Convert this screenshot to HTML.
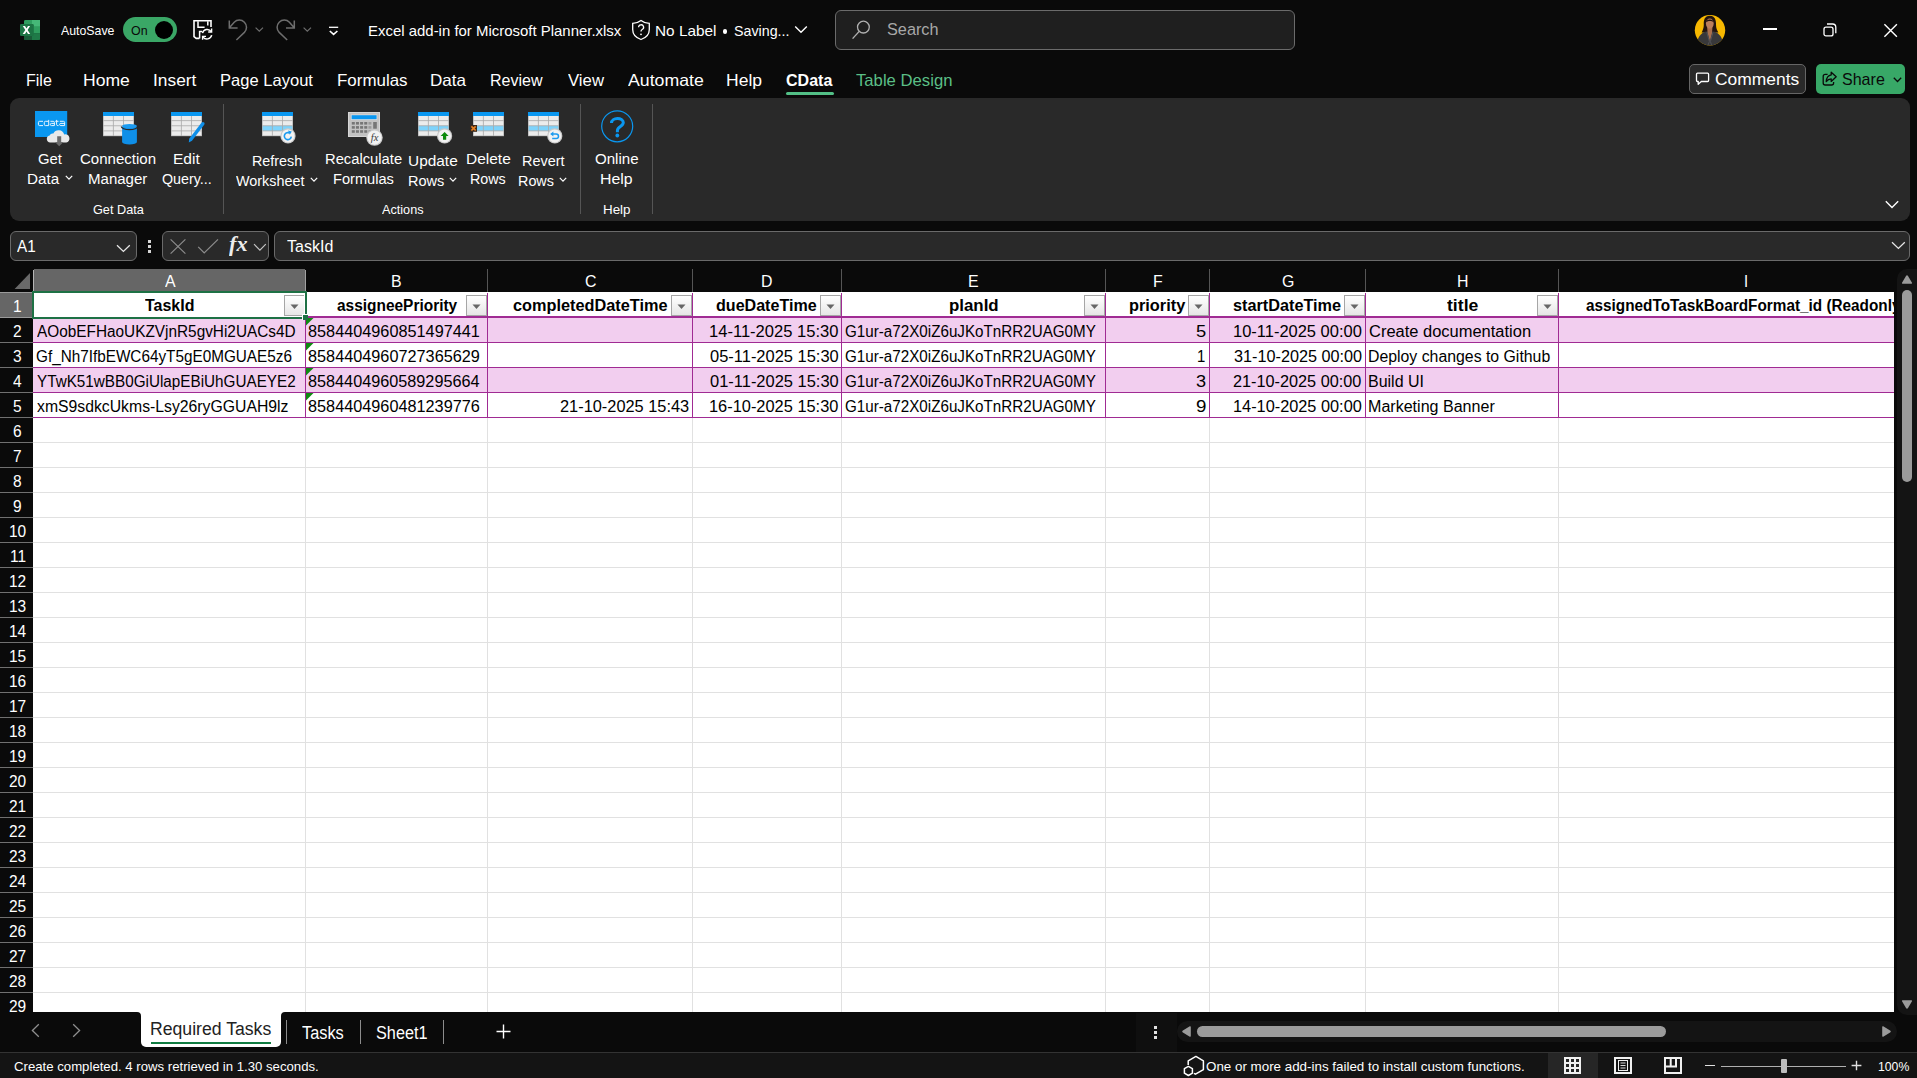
<!DOCTYPE html>
<html><head><meta charset="utf-8"><title>Excel</title>
<style>
html,body{margin:0;padding:0;}
body{width:1917px;height:1078px;overflow:hidden;background:#0a0a0a;position:relative;font-family:"Liberation Sans",sans-serif;}
.t{position:absolute;white-space:nowrap;transform-origin:0 0;display:block;}
.b{position:absolute;box-sizing:border-box;display:block;}
</style></head><body>
<svg class="b" style="left:20px;top:19px" width="21" height="22" viewBox="0 0 21 22">
<rect x="4" y="1" width="16" height="20" rx="1.6" fill="#1f7a48"/>
<rect x="12" y="1" width="8" height="6.7" fill="#45b877"/>
<path d="M5.6 1 H12 V7.7 H4 V2.6 Q4 1 5.6 1 Z" fill="#2f9e5f"/>
<rect x="4" y="7.7" width="8" height="6.6" fill="#1f7a48"/>
<rect x="12" y="7.7" width="8" height="6.6" fill="#2f9e5f"/>
<path d="M4 14.3 H20 V19.4 Q20 21 18.4 21 H5.6 Q4 21 4 19.4 Z" fill="#195c38"/>
<path d="M12 14.3 H20 V19.4 Q20 21 18.4 21 H12 Z" fill="#1f7a48"/>
<rect x="0" y="5" width="13.8" height="12" rx="1.2" fill="#1c7444"/>
<path d="M2.8 6.9 L5 6.9 L6.5 9.6 L8 6.9 L10.1 6.9 L7.6 11 L10.2 15.1 L8 15.1 L6.5 12.4 L5 15.1 L2.7 15.1 L5.3 11 Z" fill="#fff"/>
</svg>
<span class="t" style="left:61.00px;top:24px;font-size:12.2px;line-height:15px;color:#ffffff;transform:scaleX(1.0115);">AutoSave</span>
<div class="b" style="left:123px;top:17px;width:54.3px;height:25px;background:#3aa766;border-radius:12.5px;"></div>
<div class="b" style="left:155.1px;top:20.9px;width:17.8px;height:17.8px;background:#000;border-radius:9px;"></div>
<span class="t" style="left:131.34px;top:24px;font-size:12.2px;line-height:15px;color:#0a0a0a;transform:scaleX(1.0196);">On</span>
<svg class="b" style="left:192px;top:19px" width="22" height="22" viewBox="0 0 22 22"><path d="M19 8 V1.8 H2 V17.6 L4.2 19.4 H7.4" fill="none" stroke="#fff" stroke-width="1.6"/>
<path d="M6 2.2 V8.2 H12.6 M15.8 2.2 V6.6" fill="none" stroke="#fff" stroke-width="1.5"/>
<path d="M7.6 19.4 V12.4 H10.2" fill="none" stroke="#fff" stroke-width="1.5"/>
<path d="M10.5 14.2 A4.8 4.8 0 0 1 19.2 12.6 M19.7 16.2 A4.8 4.8 0 0 1 11 17.8" fill="none" stroke="#fff" stroke-width="1.5"/>
<path d="M19.6 9.6 V13 H16.2 M10.6 20.8 V17.4 H14" fill="none" stroke="#fff" stroke-width="1.4"/></svg>
<svg class="b" style="left:228px;top:18px" width="22" height="24" viewBox="0 0 22 24"><path d="M1.3 2.4 V9.9 H9.6 M1.6 9.6 L6.2 4.2 A7.2 7.2 0 0 1 16.4 14.4 L8.4 22" fill="none" stroke="#6e6e6e" stroke-width="1.5"/></svg>
<svg class="b" style="left:255px;top:27px" width="9" height="6" viewBox="0 0 9 6"><path d="M0.6 0.6 L4.3 4.2 L8 0.6" fill="none" stroke="#6e6e6e" stroke-width="1.2"/></svg>
<svg class="b" style="left:276px;top:18px" width="22" height="24" viewBox="0 0 22 24"><path d="M18.3 2.4 V9.9 H10 M18 9.6 L13.4 4.2 A7.2 7.2 0 0 0 3.2 14.4 L11.2 22" fill="none" stroke="#6e6e6e" stroke-width="1.5"/></svg>
<svg class="b" style="left:303px;top:27px" width="9" height="6" viewBox="0 0 9 6"><path d="M0.6 0.6 L4.3 4.2 L8 0.6" fill="none" stroke="#6e6e6e" stroke-width="1.2"/></svg>
<svg class="b" style="left:328px;top:25px" width="12" height="11" viewBox="0 0 12 11"><path d="M1 2.3 H10.2" stroke="#fff" stroke-width="1.3"/><path d="M1.8 6 L5.6 9.4 L9.4 6" fill="none" stroke="#fff" stroke-width="1.6"/></svg>
<span class="t" style="left:367.80px;top:22px;font-size:14.8px;line-height:18px;color:#ffffff;transform:scaleX(1.0099);">Excel add-in for Microsoft Planner.xlsx</span>
<svg class="b" style="left:631px;top:19px" width="20" height="22" viewBox="0 0 20 22"><path d="M10 1.5 C12.5 3.5 15.5 4.3 18.3 4.3 V10.5 C18.3 15.5 15 18.8 10 20.5 C5 18.8 1.7 15.5 1.7 10.5 V4.3 C4.5 4.3 7.5 3.5 10 1.5 Z" fill="none" stroke="#fff" stroke-width="1.3"/>
<path d="M7.6 8.3 a2.5 2.5 0 1 1 3.6 2.2 c-0.9 0.5 -1.2 1 -1.2 2" fill="none" stroke="#fff" stroke-width="1.3"/><circle cx="10" cy="15.3" r="0.9" fill="#fff"/></svg>
<span class="t" style="left:655.27px;top:22px;font-size:14.8px;line-height:18px;color:#ffffff;transform:scaleX(1.0380);">No Label</span>
<div class="b" style="left:722.8px;top:29px;width:4.5px;height:4.5px;background:#fff;border-radius:2.3px;"></div>
<span class="t" style="left:734.06px;top:22px;font-size:14.8px;line-height:18px;color:#ffffff;transform:scaleX(0.9632);">Saving...</span>
<svg class="b" style="left:794px;top:25px" width="14" height="10" viewBox="0 0 14 10"><path d="M1.2 1.5 L7 7.3 L12.8 1.5" fill="none" stroke="#fff" stroke-width="1.4"/></svg>
<div class="b" style="left:835px;top:10px;width:460px;height:40px;background:#1f1f1f;border:1px solid #6b6b6b;border-radius:6px;"></div>
<svg class="b" style="left:851px;top:20px" width="20" height="20" viewBox="0 0 20 20"><circle cx="12.4" cy="7.1" r="5.9" fill="none" stroke="#b0b0b0" stroke-width="1.3"/><path d="M8.2 11.4 L1.6 18.6" stroke="#b0b0b0" stroke-width="1.4"/></svg>
<span class="t" style="left:886.87px;top:20px;font-size:16.7px;line-height:20px;color:#a8a8a8;transform:scaleX(0.9745);">Search</span>
<svg class="b" style="left:1694px;top:14px" width="32" height="32" viewBox="0 0 32 32"><defs><clipPath id="av"><circle cx="16" cy="16.2" r="15.2"/></clipPath></defs>
<circle cx="16" cy="16.2" r="15.2" fill="#f7b801"/>
<g clip-path="url(#av)">
<path d="M15.8 1.8 C10.5 1.8 9.6 6.5 9.8 10.5 C9.9 14 8.6 16.5 7.6 18.6 L24.4 18.6 C23 16.3 22 14 22 10.5 C22.2 6.5 21 1.8 15.8 1.8 Z" fill="#22140f"/>
<path d="M2.5 33 C3 24 6 19.5 12 17.6 L19.6 17.6 C26 19.5 29 24 29.5 33 Z" fill="#38383a"/>
<path d="M13.2 14 H18.4 L18 19 L15.9 27 L13.6 19 Z" fill="#a86f4e"/>
<ellipse cx="15.8" cy="9.6" rx="3.9" ry="5.1" fill="#ba7f5c"/>
<path d="M11.8 8.6 C12 4.6 19.6 4.6 19.9 8.6 C18.5 6.6 13.2 6.6 11.8 8.6 Z" fill="#22140f"/>
<path d="M12.8 18.4 L15.4 27.5 L14 31 M19 18.4 L16.4 27.5 L17.6 31" fill="none" stroke="#55555a" stroke-width="0.9"/>
</g></svg>
<div class="b" style="left:1763.4px;top:28.2px;width:13.2px;height:1.4px;background:#fff;"></div>
<svg class="b" style="left:1822px;top:22px" width="17" height="17" viewBox="0 0 17 17"><rect x="2" y="5.2" width="9" height="8.7" rx="2" fill="none" stroke="#fff" stroke-width="1.3"/><path d="M5 2 H10.6 Q13.8 2 13.8 5.2 V11.2" fill="none" stroke="#fff" stroke-width="1.3"/></svg>
<svg class="b" style="left:1881.5px;top:21.5px" width="17" height="17" viewBox="0 0 17 17"><path d="M2.4 2.2 L14.9 14.8 M14.9 2.2 L2.4 14.8" stroke="#fff" stroke-width="1.4"/></svg>
<span class="t" style="left:25.92px;top:70px;font-size:16.5px;line-height:20px;color:#ffffff;transform:scaleX(0.9721);">File</span>
<span class="t" style="left:83.09px;top:70px;font-size:16.5px;line-height:20px;color:#ffffff;transform:scaleX(1.0645);">Home</span>
<span class="t" style="left:152.84px;top:70px;font-size:16.5px;line-height:20px;color:#ffffff;transform:scaleX(1.0512);">Insert</span>
<span class="t" style="left:220.28px;top:70px;font-size:16.5px;line-height:20px;color:#ffffff;transform:scaleX(1.0030);">Page Layout</span>
<span class="t" style="left:337.05px;top:70px;font-size:16.5px;line-height:20px;color:#ffffff;transform:scaleX(1.0253);">Formulas</span>
<span class="t" style="left:430.24px;top:70px;font-size:16.5px;line-height:20px;color:#ffffff;transform:scaleX(1.0334);">Data</span>
<span class="t" style="left:490.32px;top:70px;font-size:16.5px;line-height:20px;color:#ffffff;transform:scaleX(0.9716);">Review</span>
<span class="t" style="left:568.20px;top:70px;font-size:16.5px;line-height:20px;color:#ffffff;transform:scaleX(1.0148);">View</span>
<span class="t" style="left:628.20px;top:70px;font-size:16.5px;line-height:20px;color:#ffffff;transform:scaleX(1.0735);">Automate</span>
<span class="t" style="left:725.90px;top:70px;font-size:16.5px;line-height:20px;color:#ffffff;transform:scaleX(1.0618);">Help</span>
<span class="t" style="left:785.86px;top:70px;font-size:16.5px;line-height:20px;color:#ffffff;font-weight:700;transform:scaleX(0.9727);">CData</span>
<div class="b" style="left:786px;top:92px;width:48px;height:3px;background:#52bf86;border-radius:1.5px;"></div>
<span class="t" style="left:855.77px;top:70px;font-size:16.5px;line-height:20px;color:#5bbf86;transform:scaleX(1.0112);">Table Design</span>
<div class="b" style="left:1689px;top:64px;width:117px;height:30px;background:#292929;border:1px solid #666;border-radius:5px;"></div>
<svg class="b" style="left:1695px;top:71px" width="16" height="16" viewBox="0 0 16 16"><path d="M2.5 2.2 H12.6 Q13.6 2.2 13.6 3.2 V9.5 Q13.6 10.5 12.6 10.5 H6.3 L3.2 13.2 V10.5 H2.5 Q1.5 10.5 1.5 9.5 V3.2 Q1.5 2.2 2.5 2.2 Z" fill="none" stroke="#fff" stroke-width="1.3" stroke-linejoin="round"/></svg>
<span class="t" style="left:1714.73px;top:70px;font-size:16.6px;line-height:20px;color:#ffffff;transform:scaleX(1.0501);">Comments</span>
<div class="b" style="left:1816px;top:64px;width:89px;height:30px;background:#38a867;border-radius:5px;"></div>
<svg class="b" style="left:1820.5px;top:70px" width="18" height="18" viewBox="0 0 18 18"><path d="M6.6 4.4 H4.2 Q2.2 4.4 2.2 6.4 V13 Q2.2 15 4.2 15 H10.6 Q12.6 15 12.6 13 V12" fill="none" stroke="#0a0a0a" stroke-width="1.3"/><path d="M10.2 2.2 L15.2 6.8 L10.2 11.4 V8.8 C8 8.8 6.6 9.6 5.2 11.6 C5.5 7.8 7.2 5.4 10.2 4.9 Z" fill="none" stroke="#0a0a0a" stroke-width="1.3" stroke-linejoin="round"/></svg>
<span class="t" style="left:1842.28px;top:70px;font-size:16.6px;line-height:20px;color:#0a0a0a;transform:scaleX(0.9667);">Share</span>
<svg class="b" style="left:1892.5px;top:76.5px" width="9" height="6" viewBox="0 0 9 6"><path d="M0.8 0.8 L4.5 4.5 L8.2 0.8" fill="none" stroke="#0a0a0a" stroke-width="1.3"/></svg>
<div class="b" style="left:10px;top:98px;width:1900px;height:123px;background:#292929;border-radius:9px;"></div>
<span class="t" style="left:38.16px;top:150px;font-size:14.7px;line-height:18px;color:#ffffff;transform:scaleX(1.0117);">Get</span>
<span class="t" style="left:27.48px;top:170px;font-size:14.7px;line-height:18px;color:#ffffff;transform:scaleX(1.0363);">Data</span>
<span class="t" style="left:80.45px;top:150px;font-size:14.7px;line-height:18px;color:#ffffff;transform:scaleX(1.0238);">Connection</span>
<span class="t" style="left:88.30px;top:170px;font-size:14.7px;line-height:18px;color:#ffffff;transform:scaleX(1.0235);">Manager</span>
<span class="t" style="left:173.16px;top:150px;font-size:14.7px;line-height:18px;color:#ffffff;transform:scaleX(1.0577);">Edit</span>
<span class="t" style="left:162.36px;top:170px;font-size:14.7px;line-height:18px;color:#ffffff;transform:scaleX(0.9727);">Query...</span>
<span class="t" style="left:252.25px;top:152px;font-size:14.7px;line-height:18px;color:#ffffff;transform:scaleX(0.9759);">Refresh</span>
<span class="t" style="left:236.00px;top:172px;font-size:14.7px;line-height:18px;color:#ffffff;transform:scaleX(0.9790);">Worksheet</span>
<span class="t" style="left:325.22px;top:150px;font-size:14.7px;line-height:18px;color:#ffffff;transform:scaleX(1.0048);">Recalculate</span>
<span class="t" style="left:333.13px;top:170px;font-size:14.7px;line-height:18px;color:#ffffff;transform:scaleX(0.9948);">Formulas</span>
<span class="t" style="left:408.34px;top:152px;font-size:14.7px;line-height:18px;color:#ffffff;transform:scaleX(1.0499);">Update</span>
<span class="t" style="left:408.34px;top:172px;font-size:14.7px;line-height:18px;color:#ffffff;transform:scaleX(0.9897);">Rows</span>
<span class="t" style="left:466.36px;top:150px;font-size:14.7px;line-height:18px;color:#ffffff;transform:scaleX(1.0536);">Delete</span>
<span class="t" style="left:470.46px;top:170px;font-size:14.7px;line-height:18px;color:#ffffff;transform:scaleX(0.9726);">Rows</span>
<span class="t" style="left:522.14px;top:152px;font-size:14.7px;line-height:18px;color:#ffffff;transform:scaleX(0.9830);">Revert</span>
<span class="t" style="left:518.25px;top:172px;font-size:14.7px;line-height:18px;color:#ffffff;transform:scaleX(0.9783);">Rows</span>
<span class="t" style="left:594.72px;top:150px;font-size:14.7px;line-height:18px;color:#ffffff;transform:scaleX(1.0259);">Online</span>
<span class="t" style="left:600.33px;top:170px;font-size:14.7px;line-height:18px;color:#ffffff;transform:scaleX(1.0793);">Help</span>
<svg class="b" style="left:65px;top:175.2px" width="8" height="6" viewBox="0 0 8 6"><path d="M0.8 0.8 L4 4.2 L7.2 0.8" fill="none" stroke="#fff" stroke-width="1.2"/></svg>
<svg class="b" style="left:309.7px;top:177px" width="8" height="6" viewBox="0 0 8 6"><path d="M0.8 0.8 L4 4.2 L7.2 0.8" fill="none" stroke="#fff" stroke-width="1.2"/></svg>
<svg class="b" style="left:449px;top:177px" width="8" height="6" viewBox="0 0 8 6"><path d="M0.8 0.8 L4 4.2 L7.2 0.8" fill="none" stroke="#fff" stroke-width="1.2"/></svg>
<svg class="b" style="left:559px;top:177px" width="8" height="6" viewBox="0 0 8 6"><path d="M0.8 0.8 L4 4.2 L7.2 0.8" fill="none" stroke="#fff" stroke-width="1.2"/></svg>
<div class="b" style="left:223px;top:104px;width:1px;height:110px;background:#555;"></div>
<div class="b" style="left:580px;top:104px;width:1px;height:110px;background:#555;"></div>
<div class="b" style="left:652px;top:104px;width:1px;height:110px;background:#555;"></div>
<span class="t" style="left:92.87px;top:202px;font-size:12.8px;line-height:15px;color:#ffffff;transform:scaleX(0.9916);">Get Data</span>
<span class="t" style="left:381.60px;top:202px;font-size:12.8px;line-height:15px;color:#ffffff;transform:scaleX(0.9895);">Actions</span>
<span class="t" style="left:602.53px;top:202px;font-size:12.8px;line-height:15px;color:#ffffff;transform:scaleX(1.0457);">Help</span>
<svg class="b" style="left:1885px;top:199.5px" width="14" height="10" viewBox="0 0 14 10"><path d="M0.8 1.3 L7 7.4 L13.2 1.3" fill="none" stroke="#fff" stroke-width="1.4"/></svg>
<svg class="b" style="left:34px;top:110px" width="40" height="38" viewBox="0 0 40 38"><rect x="1" y="1" width="32.2" height="26" fill="#0a97f0"/>
<g fill="none" stroke="#eaf6ff" stroke-width="1">
<path d="M9 11.3 H5.6 Q4.4 11.3 4.4 12.5 V14.3 Q4.4 15.6 5.6 15.6 H9"/>
<path d="M14.7 9.9 V15.6 H11.5 Q10.3 15.6 10.3 14.4 V12.5 Q10.3 11.3 11.5 11.3 H14.7"/>
<path d="M16.4 11.3 H19.2 Q20.4 11.3 20.4 12.5 V15.6 H17.4 Q16.3 15.6 16.3 14.5 Q16.3 13.4 17.4 13.4 H20.4"/>
<path d="M22.6 9.9 V14.4 Q22.6 15.6 23.8 15.6 H24.5 M21.3 11.3 H24.5"/>
<path d="M25.8 11.3 H29.4 Q30.6 11.3 30.6 12.5 V15.6 H26.8 Q25.6 15.6 25.6 14.5 Q25.6 13.4 26.8 13.4 H30.6"/>
</g>
<path d="M16.2 32.6 A3.6 3.6 0 0 1 15.6 25.5 A3.4 3.4 0 0 1 19.4 23.6 A5.8 5.8 0 0 1 30.2 24.4 A4.1 4.1 0 0 1 32.3 32.6 Z" fill="#e9e9e9"/>
<path d="M23.2 26.2 H27.2 V32 H29.4 L25.2 36.2 L21 32 H23.2 Z" fill="#6a6a6a"/></svg>
<svg class="b" style="left:100px;top:110px" width="40" height="36" viewBox="0 0 40 36"><g transform="translate(3,2)"><rect x="0" y="0" width="31" height="24" fill="#ececec"/><rect x="0" y="8.3" width="31" height="0.8" fill="#a9a9a9"/><rect x="0" y="13.4" width="31" height="0.8" fill="#a9a9a9"/><rect x="0" y="18.5" width="31" height="0.8" fill="#a9a9a9"/><rect x="9.9" y="3.8" width="0.8" height="20.2" fill="#a9a9a9"/><rect x="20.2" y="3.8" width="0.8" height="20.2" fill="#a9a9a9"/><rect x="0.35" y="0.35" width="30.3" height="23.5" fill="none" stroke="#b4b4b4" stroke-width="0.7"/><rect x="0" y="0" width="31" height="4" fill="#0a97f0"/></g><path d="M22.1 16.4 V32 A7.4 2.6 0 0 0 36.9 32 V16.4 Z" fill="#0f8fe8"/>
<path d="M21.3 16.6 A8.2 3.1 0 0 0 37.7 16.6" fill="none" stroke="#292929" stroke-width="1.2"/>
<ellipse cx="29.5" cy="16.1" rx="7.4" ry="2.1" fill="#1c9bf0"/></svg>
<svg class="b" style="left:168px;top:110px" width="40" height="36" viewBox="0 0 40 36"><g transform="translate(3,2)"><rect x="0" y="0" width="31" height="24" fill="#ececec"/><rect x="0" y="8.3" width="31" height="0.8" fill="#a9a9a9"/><rect x="0" y="13.4" width="31" height="0.8" fill="#a9a9a9"/><rect x="0" y="18.5" width="31" height="0.8" fill="#a9a9a9"/><rect x="9.9" y="3.8" width="0.8" height="20.2" fill="#a9a9a9"/><rect x="20.2" y="3.8" width="0.8" height="20.2" fill="#a9a9a9"/><rect x="0.35" y="0.35" width="30.3" height="23.5" fill="none" stroke="#b4b4b4" stroke-width="0.7"/><rect x="0" y="0" width="31" height="4" fill="#0a97f0"/></g><path d="M33.6 12.6 Q35 11.6 36.2 12.6 Q37 13.6 36.2 14.8 L24 30.8 L20.8 32.6 L21.2 28.8 Z" fill="#0f8fe8"/></svg>
<svg class="b" style="left:259px;top:110px" width="42" height="36" viewBox="0 0 42 36"><g transform="translate(3,2)"><rect x="0" y="0" width="31" height="24" fill="#ececec"/><rect x="0" y="13.8" width="31" height="5.1" fill="#7fd3fb"/><rect x="0" y="8.3" width="31" height="0.8" fill="#a9a9a9"/><rect x="0" y="13.4" width="31" height="0.8" fill="#a9a9a9"/><rect x="0" y="18.5" width="31" height="0.8" fill="#a9a9a9"/><rect x="9.9" y="3.8" width="0.8" height="20.2" fill="#a9a9a9"/><rect x="20.2" y="3.8" width="0.8" height="20.2" fill="#a9a9a9"/><rect x="0.35" y="0.35" width="30.3" height="23.5" fill="none" stroke="#b4b4b4" stroke-width="0.7"/><rect x="0" y="0" width="31" height="4" fill="#0a97f0"/></g><circle cx="29" cy="25.9" r="7.6" fill="#c9c9c9"/><circle cx="29" cy="25.9" r="6.5" fill="#f2f2f2"/><path d="M32.3 26.6 a3.5 3.5 0 1 1 -1.5 -3.4" fill="none" stroke="#1c9bf0" stroke-width="1.6"/><path d="M29 20.6 l3.8 1 l-2 3.2 z" fill="#1c9bf0"/></svg>
<svg class="b" style="left:346px;top:110px" width="42" height="38" viewBox="0 0 42 38"><rect x="2" y="2" width="32" height="25" fill="#d6d6d6"/><rect x="3" y="3" width="30" height="23" fill="#c2c2c2"/>
<rect x="5" y="4.6" width="26.2" height="5.2" fill="#e4e4e4"/><rect x="5.6" y="5.2" width="25" height="4" fill="#0a97f0"/>
<rect x="5.8" y="12" width="3" height="2.6" fill="#767676"/><rect x="5.8" y="16.1" width="3" height="2.6" fill="#767676"/><rect x="5.8" y="20.2" width="3" height="2.6" fill="#767676"/><rect x="9.95" y="12" width="3" height="2.6" fill="#767676"/><rect x="9.95" y="16.1" width="3" height="2.6" fill="#767676"/><rect x="9.95" y="20.2" width="3" height="2.6" fill="#767676"/><rect x="14.1" y="12" width="3" height="2.6" fill="#767676"/><rect x="14.1" y="16.1" width="3" height="2.6" fill="#767676"/><rect x="14.1" y="20.2" width="3" height="2.6" fill="#767676"/><rect x="18.25" y="12" width="3" height="2.6" fill="#767676"/><rect x="18.25" y="16.1" width="3" height="2.6" fill="#767676"/><rect x="18.25" y="20.2" width="3" height="2.6" fill="#767676"/><rect x="22.4" y="12" width="3" height="2.6" fill="#9a9a9a"/><rect x="22.4" y="16.1" width="3" height="2.6" fill="#9a9a9a"/><rect x="22.4" y="20.2" width="3" height="2.6" fill="#9a9a9a"/><rect x="27.2" y="12" width="3.6" height="6.7" fill="#767676"/><circle cx="28.5" cy="27.6" r="8.2" fill="#c9c9c9"/><circle cx="28.5" cy="27.6" r="7.1" fill="#f2f2f2"/><text x="28.6" y="31.2" font-family="Liberation Serif" font-style="italic" font-size="10.5" fill="#3c3c3c" text-anchor="middle">fx</text></svg>
<svg class="b" style="left:415px;top:110px" width="42" height="36" viewBox="0 0 42 36"><g transform="translate(3,2)"><rect x="0" y="0" width="31" height="24" fill="#ececec"/><rect x="0" y="13.8" width="31" height="5.1" fill="#7fd3fb"/><rect x="0" y="8.3" width="31" height="0.8" fill="#a9a9a9"/><rect x="0" y="13.4" width="31" height="0.8" fill="#a9a9a9"/><rect x="0" y="18.5" width="31" height="0.8" fill="#a9a9a9"/><rect x="9.9" y="3.8" width="0.8" height="20.2" fill="#a9a9a9"/><rect x="20.2" y="3.8" width="0.8" height="20.2" fill="#a9a9a9"/><rect x="0.35" y="0.35" width="30.3" height="23.5" fill="none" stroke="#b4b4b4" stroke-width="0.7"/><rect x="0" y="0" width="31" height="4" fill="#0a97f0"/></g><circle cx="29.6" cy="25.9" r="7.6" fill="#c9c9c9"/><circle cx="29.6" cy="25.9" r="6.5" fill="#f2f2f2"/><path d="M29.6 21.9 l4 4.2 h-2.4 v3.7 h-3.2 v-3.7 h-2.4 z" fill="#0b8a0b"/></svg>
<svg class="b" style="left:468px;top:110px" width="42" height="36" viewBox="0 0 42 36"><g transform="translate(5,2)"><rect x="0" y="0" width="31" height="24" fill="#ececec"/><rect x="0" y="13.8" width="31" height="5.1" fill="#7fd3fb"/><rect x="0" y="8.3" width="31" height="0.8" fill="#a9a9a9"/><rect x="0" y="13.4" width="31" height="0.8" fill="#a9a9a9"/><rect x="0" y="18.5" width="31" height="0.8" fill="#a9a9a9"/><rect x="9.9" y="3.8" width="0.8" height="20.2" fill="#a9a9a9"/><rect x="20.2" y="3.8" width="0.8" height="20.2" fill="#a9a9a9"/><rect x="0.35" y="0.35" width="30.3" height="23.5" fill="none" stroke="#b4b4b4" stroke-width="0.7"/><rect x="0" y="0" width="31" height="4" fill="#0a97f0"/></g><rect x="2.1" y="15" width="6.9" height="6.8" fill="#3b2a1c"/><path d="M3.4 16.3 l4.3 4.2 M7.7 16.3 l-4.3 4.2" stroke="#e57f22" stroke-width="1.7"/></svg>
<svg class="b" style="left:525px;top:110px" width="42" height="36" viewBox="0 0 42 36"><g transform="translate(3,2)"><rect x="0" y="0" width="31" height="24" fill="#ececec"/><rect x="0" y="13.8" width="31" height="5.1" fill="#7fd3fb"/><rect x="0" y="8.3" width="31" height="0.8" fill="#a9a9a9"/><rect x="0" y="13.4" width="31" height="0.8" fill="#a9a9a9"/><rect x="0" y="18.5" width="31" height="0.8" fill="#a9a9a9"/><rect x="9.9" y="3.8" width="0.8" height="20.2" fill="#a9a9a9"/><rect x="20.2" y="3.8" width="0.8" height="20.2" fill="#a9a9a9"/><rect x="0.35" y="0.35" width="30.3" height="23.5" fill="none" stroke="#b4b4b4" stroke-width="0.7"/><rect x="0" y="0" width="31" height="4" fill="#0a97f0"/></g><circle cx="29.8" cy="25.9" r="7.6" fill="#c9c9c9"/><circle cx="29.8" cy="25.9" r="6.5" fill="#f2f2f2"/><path d="M26.6 24 h4.6 a2.3 2.3 0 0 1 0 4.6 h-4" fill="none" stroke="#1c9bf0" stroke-width="1.5"/><path d="M28.4 21.4 l-3.2 2.6 l3.2 2.6 z" fill="#1c9bf0"/></svg>
<svg class="b" style="left:599px;top:109px" width="36" height="36" viewBox="0 0 36 36"><circle cx="18.2" cy="17.3" r="15.5" fill="none" stroke="#0a97f0" stroke-width="1.2"/>
<path d="M12.5 14 C12.5 8 24.3 8 24.3 13.6 C24.3 17.6 18.4 17.4 18.4 21.6 V23.2" fill="none" stroke="#0a97f0" stroke-width="3"/><circle cx="18.3" cy="26.5" r="1.9" fill="#0a97f0"/></svg>
<div class="b" style="left:10px;top:231px;width:127px;height:30px;background:#292929;border:1px solid #6a6a6a;border-radius:6px;"></div>
<span class="t" style="left:17.10px;top:236px;font-size:16.3px;line-height:20px;color:#ffffff;transform:scaleX(0.9398);">A1</span>
<svg class="b" style="left:116px;top:243.5px" width="15" height="9" viewBox="0 0 15 9"><path d="M1 1.3 L7.4 7.4 L13.8 1.3" fill="none" stroke="#e6e6e6" stroke-width="1.3"/></svg>
<div class="b" style="left:147.8px;top:240px;width:3.2px;height:3px;background:#d6d6d6;"></div>
<div class="b" style="left:147.8px;top:245px;width:3.2px;height:3px;background:#d6d6d6;"></div>
<div class="b" style="left:147.8px;top:250px;width:3.2px;height:3px;background:#d6d6d6;"></div>
<div class="b" style="left:162px;top:231px;width:107px;height:30px;background:#292929;border:1px solid #6a6a6a;border-radius:6px;"></div>
<svg class="b" style="left:169px;top:237.5px" width="18" height="17" viewBox="0 0 18 17"><path d="M1.6 1.4 L16.4 15.6 M16.4 1.4 L1.6 15.6" stroke="#8c8c8c" stroke-width="1.2"/></svg>
<svg class="b" style="left:197px;top:237.5px" width="22" height="17" viewBox="0 0 22 17"><path d="M1.2 8.8 L7.2 15 L21 1.4" fill="none" stroke="#8c8c8c" stroke-width="1.2"/></svg>
<span class="t" style="left:229.20px;top:232px;font-size:20.5px;line-height:25px;color:#ececec;font-weight:700;font-family:'Liberation Serif',serif;font-style:italic;transform:scaleX(1.0833);">fx</span>
<svg class="b" style="left:253px;top:243px" width="14" height="9" viewBox="0 0 14 9"><path d="M1 1.2 L6.9 7.2 L12.8 1.2" fill="none" stroke="#c4c4c4" stroke-width="1.2"/></svg>
<div class="b" style="left:274px;top:231px;width:1636px;height:30px;background:#292929;border:1px solid #6a6a6a;border-radius:6px;"></div>
<span class="t" style="left:287.18px;top:236px;font-size:16.3px;line-height:20px;color:#ffffff;transform:scaleX(0.9847);">TaskId</span>
<svg class="b" style="left:1891px;top:240.5px" width="15" height="9" viewBox="0 0 15 9"><path d="M1 1.3 L7.4 7.4 L13.8 1.3" fill="none" stroke="#e6e6e6" stroke-width="1.3"/></svg>
<div class="b" style="left:33px;top:292px;width:1861px;height:720px;background:#fff;"></div>
<div class="b" style="left:34px;top:269px;width:271px;height:22px;background:#666;"></div>
<div class="b" style="left:33px;top:270px;width:1px;height:21px;background:#b5b5b5;"></div>
<div class="b" style="left:0px;top:292px;width:33px;height:26px;background:#666;border-top:1px solid #9a9a9a;border-bottom:1px solid #9a9a9a;"></div>
<svg class="b" style="left:14px;top:272px" width="18" height="18" viewBox="0 0 18 18"><path d="M16 1 V17 H0.6 Z" fill="#696969"/></svg>
<div class="b" style="left:305px;top:270px;width:1px;height:21px;background:#a0a0a0;"></div>
<div class="b" style="left:487px;top:269px;width:1px;height:23px;background:#555;"></div>
<div class="b" style="left:692px;top:269px;width:1px;height:23px;background:#555;"></div>
<div class="b" style="left:841px;top:269px;width:1px;height:23px;background:#555;"></div>
<div class="b" style="left:1105px;top:269px;width:1px;height:23px;background:#555;"></div>
<div class="b" style="left:1209px;top:269px;width:1px;height:23px;background:#555;"></div>
<div class="b" style="left:1365px;top:269px;width:1px;height:23px;background:#555;"></div>
<div class="b" style="left:1558px;top:269px;width:1px;height:23px;background:#555;"></div>
<div class="b" style="left:305px;top:293px;width:1px;height:719px;background:#e1e1e1;"></div>
<div class="b" style="left:487px;top:293px;width:1px;height:719px;background:#e1e1e1;"></div>
<div class="b" style="left:692px;top:293px;width:1px;height:719px;background:#e1e1e1;"></div>
<div class="b" style="left:841px;top:293px;width:1px;height:719px;background:#e1e1e1;"></div>
<div class="b" style="left:1105px;top:293px;width:1px;height:719px;background:#e1e1e1;"></div>
<div class="b" style="left:1209px;top:293px;width:1px;height:719px;background:#e1e1e1;"></div>
<div class="b" style="left:1365px;top:293px;width:1px;height:719px;background:#e1e1e1;"></div>
<div class="b" style="left:1558px;top:293px;width:1px;height:719px;background:#e1e1e1;"></div>
<div class="b" style="left:33px;top:317px;width:1861px;height:1px;background:#e1e1e1;"></div>
<div class="b" style="left:33px;top:342px;width:1861px;height:1px;background:#e1e1e1;"></div>
<div class="b" style="left:0px;top:342px;width:33px;height:1px;background:#707070;"></div>
<div class="b" style="left:33px;top:367px;width:1861px;height:1px;background:#e1e1e1;"></div>
<div class="b" style="left:0px;top:367px;width:33px;height:1px;background:#707070;"></div>
<div class="b" style="left:33px;top:392px;width:1861px;height:1px;background:#e1e1e1;"></div>
<div class="b" style="left:0px;top:392px;width:33px;height:1px;background:#707070;"></div>
<div class="b" style="left:33px;top:417px;width:1861px;height:1px;background:#e1e1e1;"></div>
<div class="b" style="left:0px;top:417px;width:33px;height:1px;background:#707070;"></div>
<div class="b" style="left:33px;top:442px;width:1861px;height:1px;background:#e1e1e1;"></div>
<div class="b" style="left:0px;top:442px;width:33px;height:1px;background:#707070;"></div>
<div class="b" style="left:33px;top:467px;width:1861px;height:1px;background:#e1e1e1;"></div>
<div class="b" style="left:0px;top:467px;width:33px;height:1px;background:#707070;"></div>
<div class="b" style="left:33px;top:492px;width:1861px;height:1px;background:#e1e1e1;"></div>
<div class="b" style="left:0px;top:492px;width:33px;height:1px;background:#707070;"></div>
<div class="b" style="left:33px;top:517px;width:1861px;height:1px;background:#e1e1e1;"></div>
<div class="b" style="left:0px;top:517px;width:33px;height:1px;background:#707070;"></div>
<div class="b" style="left:33px;top:542px;width:1861px;height:1px;background:#e1e1e1;"></div>
<div class="b" style="left:0px;top:542px;width:33px;height:1px;background:#707070;"></div>
<div class="b" style="left:33px;top:567px;width:1861px;height:1px;background:#e1e1e1;"></div>
<div class="b" style="left:0px;top:567px;width:33px;height:1px;background:#707070;"></div>
<div class="b" style="left:33px;top:592px;width:1861px;height:1px;background:#e1e1e1;"></div>
<div class="b" style="left:0px;top:592px;width:33px;height:1px;background:#707070;"></div>
<div class="b" style="left:33px;top:617px;width:1861px;height:1px;background:#e1e1e1;"></div>
<div class="b" style="left:0px;top:617px;width:33px;height:1px;background:#707070;"></div>
<div class="b" style="left:33px;top:642px;width:1861px;height:1px;background:#e1e1e1;"></div>
<div class="b" style="left:0px;top:642px;width:33px;height:1px;background:#707070;"></div>
<div class="b" style="left:33px;top:667px;width:1861px;height:1px;background:#e1e1e1;"></div>
<div class="b" style="left:0px;top:667px;width:33px;height:1px;background:#707070;"></div>
<div class="b" style="left:33px;top:692px;width:1861px;height:1px;background:#e1e1e1;"></div>
<div class="b" style="left:0px;top:692px;width:33px;height:1px;background:#707070;"></div>
<div class="b" style="left:33px;top:717px;width:1861px;height:1px;background:#e1e1e1;"></div>
<div class="b" style="left:0px;top:717px;width:33px;height:1px;background:#707070;"></div>
<div class="b" style="left:33px;top:742px;width:1861px;height:1px;background:#e1e1e1;"></div>
<div class="b" style="left:0px;top:742px;width:33px;height:1px;background:#707070;"></div>
<div class="b" style="left:33px;top:767px;width:1861px;height:1px;background:#e1e1e1;"></div>
<div class="b" style="left:0px;top:767px;width:33px;height:1px;background:#707070;"></div>
<div class="b" style="left:33px;top:792px;width:1861px;height:1px;background:#e1e1e1;"></div>
<div class="b" style="left:0px;top:792px;width:33px;height:1px;background:#707070;"></div>
<div class="b" style="left:33px;top:817px;width:1861px;height:1px;background:#e1e1e1;"></div>
<div class="b" style="left:0px;top:817px;width:33px;height:1px;background:#707070;"></div>
<div class="b" style="left:33px;top:842px;width:1861px;height:1px;background:#e1e1e1;"></div>
<div class="b" style="left:0px;top:842px;width:33px;height:1px;background:#707070;"></div>
<div class="b" style="left:33px;top:867px;width:1861px;height:1px;background:#e1e1e1;"></div>
<div class="b" style="left:0px;top:867px;width:33px;height:1px;background:#707070;"></div>
<div class="b" style="left:33px;top:892px;width:1861px;height:1px;background:#e1e1e1;"></div>
<div class="b" style="left:0px;top:892px;width:33px;height:1px;background:#707070;"></div>
<div class="b" style="left:33px;top:917px;width:1861px;height:1px;background:#e1e1e1;"></div>
<div class="b" style="left:0px;top:917px;width:33px;height:1px;background:#707070;"></div>
<div class="b" style="left:33px;top:942px;width:1861px;height:1px;background:#e1e1e1;"></div>
<div class="b" style="left:0px;top:942px;width:33px;height:1px;background:#707070;"></div>
<div class="b" style="left:33px;top:967px;width:1861px;height:1px;background:#e1e1e1;"></div>
<div class="b" style="left:0px;top:967px;width:33px;height:1px;background:#707070;"></div>
<div class="b" style="left:33px;top:992px;width:1861px;height:1px;background:#e1e1e1;"></div>
<div class="b" style="left:0px;top:992px;width:33px;height:1px;background:#707070;"></div>
<div class="b" style="left:33px;top:318px;width:1861px;height:24px;background:#f2ceef;"></div>
<div class="b" style="left:33px;top:368px;width:1861px;height:24px;background:#f2ceef;"></div>
<div class="b" style="left:33px;top:316px;width:1861px;height:2px;background:#a02b93;"></div>
<div class="b" style="left:33px;top:342px;width:1861px;height:1px;background:#a02b93;"></div>
<div class="b" style="left:33px;top:367px;width:1861px;height:1px;background:#a02b93;"></div>
<div class="b" style="left:33px;top:392px;width:1861px;height:1px;background:#a02b93;"></div>
<div class="b" style="left:33px;top:417px;width:1861px;height:1px;background:#a02b93;"></div>
<div class="b" style="left:305px;top:293px;width:1px;height:125px;background:#a02b93;"></div>
<div class="b" style="left:487px;top:293px;width:1px;height:125px;background:#a02b93;"></div>
<div class="b" style="left:692px;top:293px;width:1px;height:125px;background:#a02b93;"></div>
<div class="b" style="left:841px;top:293px;width:1px;height:125px;background:#a02b93;"></div>
<div class="b" style="left:1105px;top:293px;width:1px;height:125px;background:#a02b93;"></div>
<div class="b" style="left:1209px;top:293px;width:1px;height:125px;background:#a02b93;"></div>
<div class="b" style="left:1365px;top:293px;width:1px;height:125px;background:#a02b93;"></div>
<div class="b" style="left:1558px;top:293px;width:1px;height:125px;background:#a02b93;"></div>
<span class="t" style="left:164.71px;top:271px;font-size:16.4px;line-height:20px;color:#ffffff;transform:scaleX(0.9700);">A</span>
<span class="t" style="left:391.47px;top:271px;font-size:16.4px;line-height:20px;color:#ffffff;transform:scaleX(0.9700);">B</span>
<span class="t" style="left:584.65px;top:271px;font-size:16.4px;line-height:20px;color:#ffffff;transform:scaleX(0.9700);">C</span>
<span class="t" style="left:761.49px;top:271px;font-size:16.4px;line-height:20px;color:#ffffff;transform:scaleX(0.9700);">D</span>
<span class="t" style="left:968.39px;top:271px;font-size:16.4px;line-height:20px;color:#ffffff;transform:scaleX(0.9700);">E</span>
<span class="t" style="left:1152.79px;top:271px;font-size:16.4px;line-height:20px;color:#ffffff;transform:scaleX(0.9700);">F</span>
<span class="t" style="left:1281.99px;top:271px;font-size:16.4px;line-height:20px;color:#ffffff;transform:scaleX(0.9700);">G</span>
<span class="t" style="left:1456.73px;top:271px;font-size:16.4px;line-height:20px;color:#ffffff;transform:scaleX(0.9700);">H</span>
<span class="t" style="left:1743.93px;top:271px;font-size:16.4px;line-height:20px;color:#ffffff;transform:scaleX(0.9000);">I</span>
<span class="t" style="left:13.29px;top:297px;font-size:15.8px;line-height:19px;color:#ffffff;transform:scaleX(0.9800);">1</span>
<span class="t" style="left:13.29px;top:322px;font-size:15.8px;line-height:19px;color:#ffffff;transform:scaleX(0.9800);">2</span>
<span class="t" style="left:13.29px;top:347px;font-size:15.8px;line-height:19px;color:#ffffff;transform:scaleX(0.9800);">3</span>
<span class="t" style="left:13.29px;top:372px;font-size:15.8px;line-height:19px;color:#ffffff;transform:scaleX(0.9800);">4</span>
<span class="t" style="left:13.29px;top:397px;font-size:15.8px;line-height:19px;color:#ffffff;transform:scaleX(0.9800);">5</span>
<span class="t" style="left:13.29px;top:422px;font-size:15.8px;line-height:19px;color:#ffffff;transform:scaleX(0.9800);">6</span>
<span class="t" style="left:13.29px;top:447px;font-size:15.8px;line-height:19px;color:#ffffff;transform:scaleX(0.9800);">7</span>
<span class="t" style="left:13.29px;top:472px;font-size:15.8px;line-height:19px;color:#ffffff;transform:scaleX(0.9800);">8</span>
<span class="t" style="left:13.29px;top:497px;font-size:15.8px;line-height:19px;color:#ffffff;transform:scaleX(0.9800);">9</span>
<span class="t" style="left:8.99px;top:522px;font-size:15.8px;line-height:19px;color:#ffffff;transform:scaleX(0.9800);">10</span>
<span class="t" style="left:9.56px;top:547px;font-size:15.8px;line-height:19px;color:#ffffff;transform:scaleX(0.9800);">11</span>
<span class="t" style="left:8.99px;top:572px;font-size:15.8px;line-height:19px;color:#ffffff;transform:scaleX(0.9800);">12</span>
<span class="t" style="left:8.99px;top:597px;font-size:15.8px;line-height:19px;color:#ffffff;transform:scaleX(0.9800);">13</span>
<span class="t" style="left:8.99px;top:622px;font-size:15.8px;line-height:19px;color:#ffffff;transform:scaleX(0.9800);">14</span>
<span class="t" style="left:8.99px;top:647px;font-size:15.8px;line-height:19px;color:#ffffff;transform:scaleX(0.9800);">15</span>
<span class="t" style="left:8.99px;top:672px;font-size:15.8px;line-height:19px;color:#ffffff;transform:scaleX(0.9800);">16</span>
<span class="t" style="left:8.99px;top:697px;font-size:15.8px;line-height:19px;color:#ffffff;transform:scaleX(0.9800);">17</span>
<span class="t" style="left:8.99px;top:722px;font-size:15.8px;line-height:19px;color:#ffffff;transform:scaleX(0.9800);">18</span>
<span class="t" style="left:8.99px;top:747px;font-size:15.8px;line-height:19px;color:#ffffff;transform:scaleX(0.9800);">19</span>
<span class="t" style="left:8.99px;top:772px;font-size:15.8px;line-height:19px;color:#ffffff;transform:scaleX(0.9800);">20</span>
<span class="t" style="left:8.99px;top:797px;font-size:15.8px;line-height:19px;color:#ffffff;transform:scaleX(0.9800);">21</span>
<span class="t" style="left:8.99px;top:822px;font-size:15.8px;line-height:19px;color:#ffffff;transform:scaleX(0.9800);">22</span>
<span class="t" style="left:8.99px;top:847px;font-size:15.8px;line-height:19px;color:#ffffff;transform:scaleX(0.9800);">23</span>
<span class="t" style="left:8.99px;top:872px;font-size:15.8px;line-height:19px;color:#ffffff;transform:scaleX(0.9800);">24</span>
<span class="t" style="left:8.99px;top:897px;font-size:15.8px;line-height:19px;color:#ffffff;transform:scaleX(0.9800);">25</span>
<span class="t" style="left:8.99px;top:922px;font-size:15.8px;line-height:19px;color:#ffffff;transform:scaleX(0.9800);">26</span>
<span class="t" style="left:8.99px;top:947px;font-size:15.8px;line-height:19px;color:#ffffff;transform:scaleX(0.9800);">27</span>
<span class="t" style="left:8.99px;top:972px;font-size:15.8px;line-height:19px;color:#ffffff;transform:scaleX(0.9800);">28</span>
<span class="t" style="left:8.99px;top:997px;font-size:15.8px;line-height:19px;color:#ffffff;transform:scaleX(0.9800);">29</span>
<span class="t" style="left:144.84px;top:296px;font-size:15.6px;line-height:19px;color:#000;font-weight:700;transform:scaleX(1.0252);">TaskId</span>
<span class="t" style="left:336.81px;top:296px;font-size:15.6px;line-height:19px;color:#000;font-weight:700;transform:scaleX(0.9903);">assigneePriority</span>
<span class="t" style="left:512.83px;top:296px;font-size:15.6px;line-height:19px;color:#000;font-weight:700;transform:scaleX(1.0452);">completedDateTime</span>
<span class="t" style="left:716.36px;top:296px;font-size:15.6px;line-height:19px;color:#000;font-weight:700;transform:scaleX(1.0304);">dueDateTime</span>
<span class="t" style="left:948.90px;top:296px;font-size:15.6px;line-height:19px;color:#000;font-weight:700;transform:scaleX(1.0817);">planId</span>
<span class="t" style="left:1128.74px;top:296px;font-size:15.6px;line-height:19px;color:#000;font-weight:700;transform:scaleX(1.0469);">priority</span>
<span class="t" style="left:1233.43px;top:296px;font-size:15.6px;line-height:19px;color:#000;font-weight:700;transform:scaleX(1.0416);">startDateTime</span>
<span class="t" style="left:1447.22px;top:296px;font-size:15.6px;line-height:19px;color:#000;font-weight:700;transform:scaleX(1.1306);">title</span>
<div class="b" style="left:1559px;top:293px;width:335px;height:23px;overflow:hidden;">
<span class="t" style="left:27.32px;top:3px;font-size:15.6px;line-height:19px;color:#000;font-weight:700;transform:scaleX(0.9827);">assignedToTaskBoardFormat_id (Readonly)</span>
</div>
<div class="b" style="left:284px;top:295px;width:21px;height:21px;border:1px solid #a6a6a6;background:linear-gradient(#fff,#e6e6e6);"></div>
<svg class="b" style="left:290px;top:304px" width="9" height="6" viewBox="0 0 9 6"><path d="M0.5 0.5 H8.5 L4.5 5 Z" fill="#666"/></svg>
<div class="b" style="left:466px;top:295px;width:21px;height:21px;border:1px solid #a6a6a6;background:linear-gradient(#fff,#e6e6e6);"></div>
<svg class="b" style="left:472px;top:304px" width="9" height="6" viewBox="0 0 9 6"><path d="M0.5 0.5 H8.5 L4.5 5 Z" fill="#666"/></svg>
<div class="b" style="left:671px;top:295px;width:21px;height:21px;border:1px solid #a6a6a6;background:linear-gradient(#fff,#e6e6e6);"></div>
<svg class="b" style="left:677px;top:304px" width="9" height="6" viewBox="0 0 9 6"><path d="M0.5 0.5 H8.5 L4.5 5 Z" fill="#666"/></svg>
<div class="b" style="left:820px;top:295px;width:21px;height:21px;border:1px solid #a6a6a6;background:linear-gradient(#fff,#e6e6e6);"></div>
<svg class="b" style="left:826px;top:304px" width="9" height="6" viewBox="0 0 9 6"><path d="M0.5 0.5 H8.5 L4.5 5 Z" fill="#666"/></svg>
<div class="b" style="left:1084px;top:295px;width:21px;height:21px;border:1px solid #a6a6a6;background:linear-gradient(#fff,#e6e6e6);"></div>
<svg class="b" style="left:1090px;top:304px" width="9" height="6" viewBox="0 0 9 6"><path d="M0.5 0.5 H8.5 L4.5 5 Z" fill="#666"/></svg>
<div class="b" style="left:1188px;top:295px;width:21px;height:21px;border:1px solid #a6a6a6;background:linear-gradient(#fff,#e6e6e6);"></div>
<svg class="b" style="left:1194px;top:304px" width="9" height="6" viewBox="0 0 9 6"><path d="M0.5 0.5 H8.5 L4.5 5 Z" fill="#666"/></svg>
<div class="b" style="left:1344px;top:295px;width:21px;height:21px;border:1px solid #a6a6a6;background:linear-gradient(#fff,#e6e6e6);"></div>
<svg class="b" style="left:1350px;top:304px" width="9" height="6" viewBox="0 0 9 6"><path d="M0.5 0.5 H8.5 L4.5 5 Z" fill="#666"/></svg>
<div class="b" style="left:1537px;top:295px;width:21px;height:21px;border:1px solid #a6a6a6;background:linear-gradient(#fff,#e6e6e6);"></div>
<svg class="b" style="left:1543px;top:304px" width="9" height="6" viewBox="0 0 9 6"><path d="M0.5 0.5 H8.5 L4.5 5 Z" fill="#666"/></svg>
<span class="t" style="left:37.00px;top:322px;font-size:15.8px;line-height:19px;color:#000;transform:scaleX(0.9723);">AOobEFHaoUKZVjnR5gvHi2UACs4D</span>
<span class="t" style="left:308.35px;top:322px;font-size:15.8px;line-height:19px;color:#000;transform:scaleX(1.0297);">8584404960851497441</span>
<span class="t" style="left:709.16px;top:322px;font-size:15.8px;line-height:19px;color:#000;transform:scaleX(1.0475);">14-11-2025 15:30</span>
<span class="t" style="left:844.84px;top:322px;font-size:15.8px;line-height:19px;color:#000;transform:scaleX(0.9620);">G1ur-a72X0iZ6uJKoTnRR2UAG0MY</span>
<span class="t" style="left:1196.27px;top:322px;font-size:15.8px;line-height:19px;color:#000;transform:scaleX(1.1592);">5</span>
<span class="t" style="left:1233.06px;top:322px;font-size:15.8px;line-height:19px;color:#000;transform:scaleX(1.0425);">10-11-2025 00:00</span>
<span class="t" style="left:1368.58px;top:322px;font-size:15.8px;line-height:19px;color:#000;transform:scaleX(1.0427);">Create documentation</span>
<span class="t" style="left:36.23px;top:347px;font-size:15.8px;line-height:19px;color:#000;transform:scaleX(0.9684);">Gf_Nh7IfbEWC64yT5gE0MGUAE5z6</span>
<span class="t" style="left:308.35px;top:347px;font-size:15.8px;line-height:19px;color:#000;transform:scaleX(1.0297);">8584404960727365629</span>
<span class="t" style="left:709.82px;top:347px;font-size:15.8px;line-height:19px;color:#000;transform:scaleX(1.0421);">05-11-2025 15:30</span>
<span class="t" style="left:844.84px;top:347px;font-size:15.8px;line-height:19px;color:#000;transform:scaleX(0.9620);">G1ur-a72X0iZ6uJKoTnRR2UAG0MY</span>
<span class="t" style="left:1197.38px;top:347px;font-size:15.8px;line-height:19px;color:#000;transform:scaleX(0.9457);">1</span>
<span class="t" style="left:1233.73px;top:347px;font-size:15.8px;line-height:19px;color:#000;transform:scaleX(1.0272);">31-10-2025 00:00</span>
<span class="t" style="left:1368.13px;top:347px;font-size:15.8px;line-height:19px;color:#000;transform:scaleX(1.0023);">Deploy changes to Github</span>
<span class="t" style="left:36.69px;top:372px;font-size:15.8px;line-height:19px;color:#000;transform:scaleX(0.9660);">YTwK51wBB0GiUlapEBiUhGUAEYE2</span>
<span class="t" style="left:308.35px;top:372px;font-size:15.8px;line-height:19px;color:#000;transform:scaleX(1.0277);">8584404960589295664</span>
<span class="t" style="left:709.82px;top:372px;font-size:15.8px;line-height:19px;color:#000;transform:scaleX(1.0421);">01-11-2025 15:30</span>
<span class="t" style="left:844.84px;top:372px;font-size:15.8px;line-height:19px;color:#000;transform:scaleX(0.9620);">G1ur-a72X0iZ6uJKoTnRR2UAG0MY</span>
<span class="t" style="left:1196.37px;top:372px;font-size:15.8px;line-height:19px;color:#000;transform:scaleX(1.1472);">3</span>
<span class="t" style="left:1233.49px;top:372px;font-size:15.8px;line-height:19px;color:#000;transform:scaleX(1.0292);">21-10-2025 00:00</span>
<span class="t" style="left:1368.12px;top:372px;font-size:15.8px;line-height:19px;color:#000;transform:scaleX(1.0115);">Build UI</span>
<span class="t" style="left:36.84px;top:397px;font-size:15.8px;line-height:19px;color:#000;transform:scaleX(0.9982);">xmS9sdkcUkms-Lsy26ryGGUAH9lz</span>
<span class="t" style="left:308.35px;top:397px;font-size:15.8px;line-height:19px;color:#000;transform:scaleX(1.0292);">8584404960481239776</span>
<span class="t" style="left:560.18px;top:397px;font-size:15.8px;line-height:19px;color:#000;transform:scaleX(1.0355);">21-10-2025 15:43</span>
<span class="t" style="left:709.17px;top:397px;font-size:15.8px;line-height:19px;color:#000;transform:scaleX(1.0374);">16-10-2025 15:30</span>
<span class="t" style="left:844.84px;top:397px;font-size:15.8px;line-height:19px;color:#000;transform:scaleX(0.9620);">G1ur-a72X0iZ6uJKoTnRR2UAG0MY</span>
<span class="t" style="left:1196.16px;top:397px;font-size:15.8px;line-height:19px;color:#000;transform:scaleX(1.1842);">9</span>
<span class="t" style="left:1233.08px;top:397px;font-size:15.8px;line-height:19px;color:#000;transform:scaleX(1.0325);">14-10-2025 00:00</span>
<span class="t" style="left:1368.11px;top:397px;font-size:15.8px;line-height:19px;color:#000;transform:scaleX(1.0167);">Marketing Banner</span>
<svg class="b" style="left:306px;top:318px" width="8" height="8" viewBox="0 0 8 8"><path d="M0 0 H7.5 L0 7.5 Z" fill="#0f8a10"/></svg>
<svg class="b" style="left:306px;top:343px" width="8" height="8" viewBox="0 0 8 8"><path d="M0 0 H7.5 L0 7.5 Z" fill="#0f8a10"/></svg>
<svg class="b" style="left:306px;top:368px" width="8" height="8" viewBox="0 0 8 8"><path d="M0 0 H7.5 L0 7.5 Z" fill="#0f8a10"/></svg>
<svg class="b" style="left:306px;top:393px" width="8" height="8" viewBox="0 0 8 8"><path d="M0 0 H7.5 L0 7.5 Z" fill="#0f8a10"/></svg>
<div class="b" style="left:32px;top:291px;width:275px;height:28px;border:2px solid #1e7145;box-shadow:inset 0 0 0 1px #fff;"></div>
<div class="b" style="left:302px;top:314px;width:6px;height:6px;background:#1e7145;border-left:1px solid #fff;border-top:1px solid #fff;"></div>
<div class="b" style="left:1897px;top:269px;width:20px;height:746px;background:#141414;border-radius:10px 0 0 10px;"></div>
<svg class="b" style="left:1901px;top:274px" width="12" height="11" viewBox="0 0 12 11"><path d="M6 1.2 Q6.6 1.2 7 1.9 L11 8.8 Q11.4 9.8 10.3 9.8 H1.7 Q0.6 9.8 1 8.8 L5 1.9 Q5.4 1.2 6 1.2 Z" fill="#9b9b9b"/></svg>
<div class="b" style="left:1902px;top:290px;width:10px;height:192px;background:#9b9b9b;border-radius:5px;"></div>
<svg class="b" style="left:1901px;top:999px" width="12" height="11" viewBox="0 0 12 11"><path d="M6 9.8 Q6.6 9.8 7 9.1 L11 2.2 Q11.4 1.2 10.3 1.2 H1.7 Q0.6 1.2 1 2.2 L5 9.1 Q5.4 9.8 6 9.8 Z" fill="#9b9b9b"/></svg>
<div class="b" style="left:141px;top:1012px;width:140px;height:35px;background:#fff;border-radius:0 0 5px 5px;"></div>
<svg class="b" style="left:137px;top:1012px" width="4" height="4" viewBox="0 0 4 4"><path d="M0 0 H4 V4 A4 4 0 0 0 0 0 Z" fill="#fff"/></svg>
<svg class="b" style="left:281px;top:1012px" width="4" height="4" viewBox="0 0 4 4"><path d="M4 0 H0 V4 A4 4 0 0 1 4 0 Z" fill="#fff"/></svg>
<svg class="b" style="left:30px;top:1023px" width="11" height="15" viewBox="0 0 11 15"><path d="M8.8 1.2 L2.4 7.5 L8.8 13.8" fill="none" stroke="#8f8f8f" stroke-width="1.3"/></svg>
<svg class="b" style="left:71px;top:1023px" width="11" height="15" viewBox="0 0 11 15"><path d="M2.2 1.2 L8.6 7.5 L2.2 13.8" fill="none" stroke="#8f8f8f" stroke-width="1.3"/></svg>
<span class="t" style="left:150.09px;top:1019px;font-size:17.6px;line-height:21px;color:#222;transform:scaleX(1.0027);">Required Tasks</span>
<div class="b" style="left:151px;top:1042px;width:120px;height:2px;background:#107c41;"></div>
<span class="t" style="left:301.97px;top:1023px;font-size:17.6px;line-height:21px;color:#ffffff;transform:scaleX(0.9295);">Tasks</span>
<span class="t" style="left:376.27px;top:1023px;font-size:17.6px;line-height:21px;color:#ffffff;transform:scaleX(0.9242);">Sheet1</span>
<div class="b" style="left:286px;top:1020px;width:1px;height:24px;background:#8c8c8c;"></div>
<div class="b" style="left:360px;top:1020px;width:1px;height:24px;background:#8c8c8c;"></div>
<div class="b" style="left:443px;top:1020px;width:1px;height:24px;background:#8c8c8c;"></div>
<svg class="b" style="left:496px;top:1024px" width="15" height="15" viewBox="0 0 15 15"><path d="M7.5 0.5 V14.5 M0.5 7.5 H14.5" stroke="#fff" stroke-width="1.4"/></svg>
<div class="b" style="left:1136px;top:1013px;width:41px;height:39px;background:#0f0f0f;"></div>
<div class="b" style="left:1154.3px;top:1026.3px;width:3.2px;height:3px;background:#e0e0e0;"></div>
<div class="b" style="left:1154.3px;top:1031.3px;width:3.2px;height:3px;background:#e0e0e0;"></div>
<div class="b" style="left:1154.3px;top:1036.3px;width:3.2px;height:3px;background:#e0e0e0;"></div>
<div class="b" style="left:1177px;top:1021px;width:720px;height:21px;background:#141414;border-radius:10.5px;"></div>
<svg class="b" style="left:1181px;top:1025px" width="11" height="13" viewBox="0 0 11 13"><path d="M1.2 6.5 Q1.2 5.9 1.9 5.5 L8.8 1.3 Q9.8 0.9 9.8 2 V11 Q9.8 12.1 8.8 11.7 L1.9 7.5 Q1.2 7.1 1.2 6.5 Z" fill="#9b9b9b"/></svg>
<svg class="b" style="left:1881px;top:1025px" width="11" height="13" viewBox="0 0 11 13"><path d="M9.8 6.5 Q9.8 5.9 9.1 5.5 L2.2 1.3 Q1.2 0.9 1.2 2 V11 Q1.2 12.1 2.2 11.7 L9.1 7.5 Q9.8 7.1 9.8 6.5 Z" fill="#9b9b9b"/></svg>
<div class="b" style="left:1197px;top:1026px;width:469px;height:11px;background:#9b9b9b;border-radius:5.5px;"></div>
<div class="b" style="left:0px;top:1052px;width:1917px;height:26px;background:#141414;border-top:1px solid #333;"></div>
<span class="t" style="left:14.34px;top:1059px;font-size:12.8px;line-height:15px;color:#ffffff;transform:scaleX(1.0299);">Create completed. 4 rows retrieved in 1.30 seconds.</span>
<svg class="b" style="left:1183px;top:1055px" width="23" height="23" viewBox="0 0 23 23"><path d="M5.2 10 V5.9 L12.9 1.4 L20.4 5.9 V14.6 L12.5 19.2 L10.9 18.3" fill="none" stroke="#fff" stroke-width="1.5" stroke-linejoin="round"/><path d="M5.4 11.4 L9.4 13.6 V18.2 L5.4 20.5 L1.4 18.2 V13.6 Z" fill="none" stroke="#fff" stroke-width="1.5" stroke-linejoin="round"/></svg>
<span class="t" style="left:1206.40px;top:1059px;font-size:12.8px;line-height:15px;color:#ffffff;transform:scaleX(1.0445);">One or more add-ins failed to install custom functions.</span>
<div class="b" style="left:1548px;top:1053px;width:50px;height:25px;background:#262626;"></div>
<svg class="b" style="left:1564px;top:1057px" width="17" height="17" viewBox="0 0 17 17"><rect x="0" y="0" width="17" height="17" fill="#f0f0f0"/><rect x="2" y="2" width="3" height="3" fill="#262626"/><rect x="2" y="7" width="3" height="3" fill="#262626"/><rect x="2" y="12" width="3" height="3" fill="#262626"/><rect x="7" y="2" width="3" height="3" fill="#262626"/><rect x="7" y="7" width="3" height="3" fill="#262626"/><rect x="7" y="12" width="3" height="3" fill="#262626"/><rect x="12" y="2" width="3" height="3" fill="#262626"/><rect x="12" y="7" width="3" height="3" fill="#262626"/><rect x="12" y="12" width="3" height="3" fill="#262626"/></svg>
<svg class="b" style="left:1614px;top:1057px" width="18" height="17" viewBox="0 0 18 17"><rect x="1" y="1" width="16" height="15" fill="none" stroke="#f0f0f0" stroke-width="2"/><rect x="4.5" y="3.5" width="9" height="10" fill="none" stroke="#f0f0f0" stroke-width="1"/><path d="M6.5 6 H11.5 M6.5 8.5 H11.5 M6.5 11 H11.5" stroke="#d8d8d8" stroke-width="1.2"/></svg>
<svg class="b" style="left:1664px;top:1057px" width="18" height="17" viewBox="0 0 18 17"><rect x="1" y="1" width="16" height="15" fill="none" stroke="#f0f0f0" stroke-width="2"/><path d="M1 9.5 H12 V1 M6.7 1 V9.5" fill="none" stroke="#f0f0f0" stroke-width="2"/></svg>
<div class="b" style="left:1704.8px;top:1064.7px;width:10.2px;height:1.5px;background:#e0e0e0;"></div>
<div class="b" style="left:1721px;top:1065.6px;width:125.2px;height:1.4px;background:#b0b0b0;"></div>
<div class="b" style="left:1780.9px;top:1059px;width:6.2px;height:14px;background:#bdbdbd;border-radius:1px;"></div>
<svg class="b" style="left:1850.4px;top:1059.2px" width="13" height="13" viewBox="0 0 13 13"><path d="M6.5 1.7 V11.3 M1.6 6.5 H11.4" stroke="#e0e0e0" stroke-width="1.4"/></svg>
<span class="t" style="left:1878.08px;top:1059px;font-size:12.8px;line-height:15px;color:#ffffff;transform:scaleX(0.9566);">100%</span>
</body></html>
